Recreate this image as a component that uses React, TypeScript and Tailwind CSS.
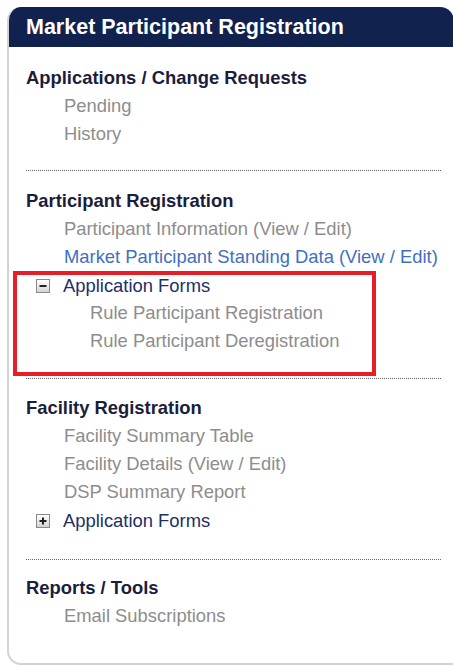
import React from "react";

type Item = { label: string; tone?: "gray" | "blue" };

const ToggleBox: React.FC<{ open: boolean }> = ({ open }) => (
  <span className="w-[14px] h-[14px] border border-[#8a8a8a] bg-gradient-to-b from-white to-[#d4d4d4] flex items-center justify-center shrink-0">
    <svg width="10" height="10" viewBox="0 0 10 10">
      <rect x="1.5" y="4" width="7" height="2" fill="#222" />
      {!open && <rect x="4" y="1.5" width="2" height="7" fill="#222" />}
    </svg>
  </span>
);

const Heading: React.FC<{ children: React.ReactNode }> = ({ children }) => (
  <div className="h-[28px] leading-[28px] font-bold text-[#1b1d3c]">{children}</div>
);

const Links: React.FC<{ items: Item[]; indent?: string }> = ({ items, indent = "pl-[38px]" }) => (
  <>
    {items.map((it) => (
      <div
        key={it.label}
        className={`h-[28px] leading-[28px] ${indent} ${it.tone === "blue" ? "text-[#3f70c0]" : "text-[#8d8d8d]"}`}
      >
        {it.label}
      </div>
    ))}
  </>
);

const Divider: React.FC = () => <div className="border-t border-dotted border-[#666] mr-[13px]" />;

export default function App() {
  return (
    <div className="min-h-[668px] bg-white pt-[7px] pl-[7px] overflow-hidden" style={{ fontFamily: '"Liberation Sans", Arial, sans-serif' }}>
      <div className="w-[447px] h-[658px] border-l-2 border-b-2 border-[#d2d2d2] rounded-t-[14px] rounded-bl-[14px] overflow-hidden">
        <div className="h-[40px] bg-[#12224f] pl-[17px] flex items-center text-white font-bold text-[21.5px]">
          Market Participant Registration
        </div>

        <div className="pl-[17px] pt-[17px] text-[18.4px]">
          <Heading>Applications / Change Requests</Heading>
          <Links items={[{ label: "Pending" }, { label: "History" }]} />
          <div className="h-[22px]" />
          <Divider />

          <div className="h-[16px]" />
          <Heading>Participant Registration</Heading>
          <Links
            items={[
              { label: "Participant Information (View / Edit)" },
              { label: "Market Participant Standing Data (View / Edit)", tone: "blue" },
            ]}
          />
          <div className="-ml-[13px] w-[363px] border-[4px] border-[#e61e28] pl-[19px] pb-[17px]">
            <div className="h-[22px] flex items-center gap-[13px] text-[#1d2f67]">
              <ToggleBox open />
              <span>Application Forms</span>
            </div>
            <div className="mt-[2px]">
              <Links
                items={[{ label: "Rule Participant Registration" }, { label: "Rule Participant Deregistration" }]}
                indent="pl-[54px]"
              />
            </div>
          </div>
          <div className="h-[2px]" />
          <Divider />

          <div className="h-[15px]" />
          <Heading>Facility Registration</Heading>
          <Links
            items={[
              { label: "Facility Summary Table" },
              { label: "Facility Details (View / Edit)" },
              { label: "DSP Summary Report" },
            ]}
          />
          <div className="h-[28px] mt-[1px] flex items-center gap-[13px] pl-[10px] text-[#1d2f67]">
            <ToggleBox open={false} />
            <span>Application Forms</span>
          </div>
          <div className="h-[24px]" />
          <Divider />

          <div className="h-[14px]" />
          <Heading>Reports / Tools</Heading>
          <Links items={[{ label: "Email Subscriptions" }]} />
        </div>
      </div>
    </div>
  );
}
